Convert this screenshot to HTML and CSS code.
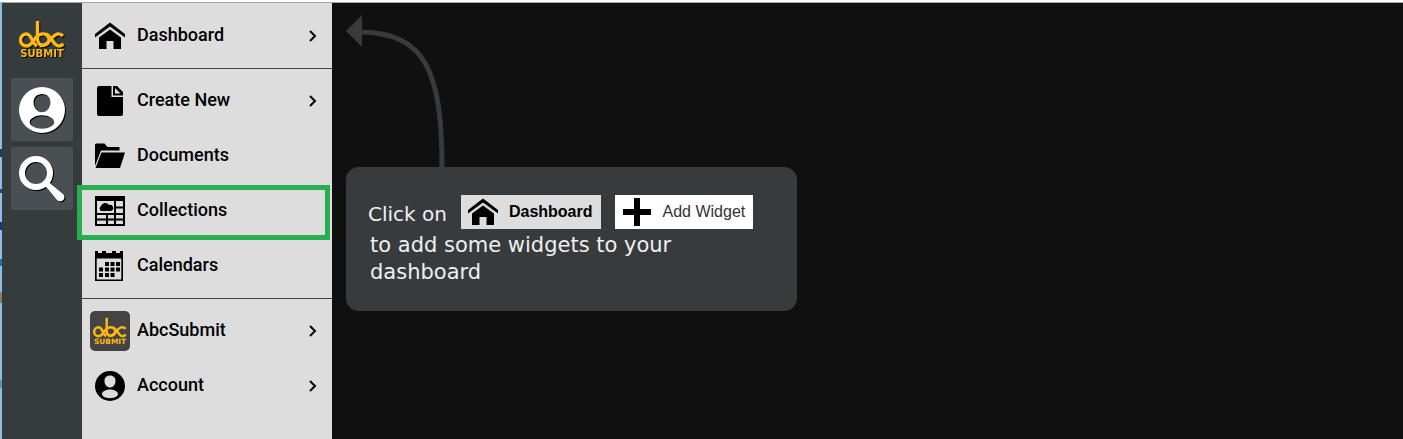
FILE: index.html
```html
<!DOCTYPE html>
<html lang="en">
<head>
  <meta charset="UTF-8">
  <meta name="viewport" content="width=device-width, initial-scale=1.0">
  <title>AbcSubmit - Dashboard</title>
  <link rel="stylesheet" href="styles.css">
</head>
<body>

  <!-- Shared icons -->
  <svg class="sprite" aria-hidden="true">
    <symbol id="logo" viewBox="0 0 46 38">
      <g fill="none" stroke="currentColor" stroke-width="3.4">
        <path d="M18 26C13 24 13 14 7.500 14A6 6 0 1 0 7.500 26C14 26 14 18 20 15C26 12 31 16 30 21C29 26 19 28 18.500 19V1"/>
        <path d="M44 16C40 12 36 14 32 19C28 24 25 26.500 21 25.500M27 14C33 16 34 26 40 26C42 26 43 25 44.500 24"/>
      </g>
      <text class="logo-text" x="23" y="37" text-anchor="middle" fill="currentColor">SUBMIT</text>
    </symbol>
    <symbol id="home" viewBox="0 0 30 30">
      <path d="M15 1.500L0 13v3.500L15 5.500l15 11V13z"/>
      <path d="M15 8.500L4 16.500V28h7.500v-8h7v8H26V16.500z"/>
    </symbol>
    <symbol id="user" viewBox="0 0 30 30">
      <path fill-rule="evenodd" d="M15 0a15 15 0 1 0 0 30a15 15 0 1 0 0-30zM15 4.500c3.500 0 5.500 2.300 5.500 5.500c0 3.500-2.200 6.500-5.500 6.500s-5.500-3-5.500-6.500c0-3.200 2-5.500 5.500-5.500zM15 18.500c4.500 0 8 2.200 8 4.500c0 2.300-3.500 4.200-8 4.200s-8-1.900-8-4.200c0-2.300 3.500-4.500 8-4.500z"/>
    </symbol>
  </svg>

  <div class="app">
    <div class="edge"></div>
    <nav class="rail" aria-label="Quick access">
      <a href="#" class="rail-logo" aria-label="AbcSubmit"><svg><use href="#logo"/></svg></a>
      <button type="button" class="rail-button" aria-label="Profile"><svg><use href="#user"/></svg></button>
      <button type="button" class="rail-button" aria-label="Search">
        <svg viewBox="0 0 46 46">
          <circle cx="17" cy="17" r="14" fill="none" stroke="currentColor" stroke-width="6"/>
          <path d="M26 30l4-4l3 3l11 9c4 4-1 10-6 6L29 33z"/>
        </svg>
      </button>
    </nav>

    <nav class="menu" aria-label="Main menu">
      <div class="menu-group">
        <a href="#" class="menu-item">
          <span class="menu-icon"><svg><use href="#home"/></svg></span>
          <span class="menu-label">Dashboard</span>
          <svg class="chevron" viewBox="0 0 8 12"><path d="M1 1l5 5l-5 5"/></svg>
        </a>
      </div>
      <div class="menu-group">
        <a href="#" class="menu-item">
          <span class="menu-icon"><svg viewBox="0 0 30 30">
            <path d="M4 0h12.500v11H28v17a2 2 0 0 1-2 2H4a2 2 0 0 1-2-2V2a2 2 0 0 1 2-2z"/>
            <path fill-rule="evenodd" d="M18 0h4L28 6v3.500H18zM20 2v5.500h5.500z"/>
          </svg></span>
          <span class="menu-label">Create New</span>
          <svg class="chevron" viewBox="0 0 8 12"><path d="M1 1l5 5l-5 5"/></svg>
        </a>
        <a href="#" class="menu-item">
          <span class="menu-icon"><svg viewBox="0 0 30 30">
            <path d="M0 25V3.500L1 2.500h8.500l3 3.500h12v3.500H6z"/>
            <path d="M6.500 11.500H30L25 27H.500z"/>
          </svg></span>
          <span class="menu-label">Documents</span>
        </a>
        <a href="#" class="menu-item highlighted">
          <span class="menu-icon"><svg viewBox="0 0 30 30">
            <path d="M0 0h30v5H0z"/>
            <path d="M1 0v29h28V0M1 18h28M1 23.500h28M20 5v24M12 18v11M20 11.500h9" fill="none" stroke="currentColor" stroke-width="2"/>
            <path d="M6 15a3 3 0 0 1 0-5a4.500 4.500 0 0 1 8-1a3 3 0 0 1 2 6z"/>
          </svg></span>
          <span class="menu-label">Collections</span>
        </a>
        <a href="#" class="menu-item">
          <span class="menu-icon"><svg viewBox="0 0 30 30">
            <path fill-rule="evenodd" d="M0 0h3v2h4V0h4v2h6V0h4v2h4V0h3v30H0zM1.700 7.500v21h24.600v-21z"/>
            <path d="M10 11h4v4h-4zM15.500 11h4v4h-4zM21 11h4v4h-4zM4 16.500h4v4H4zM10 16.500h4v4h-4zM15.500 16.500h4v4h-4zM21 16.500h4v4h-4zM4 22h4v4H4zM10 22h4v4h-4zM15.500 22h4v4h-4z"/>
          </svg></span>
          <span class="menu-label">Calendars</span>
        </a>
      </div>
      <div class="menu-group">
        <a href="#" class="menu-item">
          <span class="menu-icon brand"><svg><use href="#logo"/></svg></span>
          <span class="menu-label">AbcSubmit</span>
          <svg class="chevron" viewBox="0 0 8 12"><path d="M1 1l5 5l-5 5"/></svg>
        </a>
        <a href="#" class="menu-item">
          <span class="menu-icon"><svg><use href="#user"/></svg></span>
          <span class="menu-label">Account</span>
          <svg class="chevron" viewBox="0 0 8 12"><path d="M1 1l5 5l-5 5"/></svg>
        </a>
      </div>
    </nav>

    <main class="content">
      <svg class="arrow" viewBox="0 0 100 152">
        <path d="M0 16L16 0v32z"/>
        <path d="M15 17C79 18 96 56 96 152" fill="none" stroke="currentColor" stroke-width="5"/>
      </svg>
      <section class="hint">
        <div class="hint-row">
          <span class="hint-lead">Click on</span>
          <button type="button" class="chip chip-dashboard"><svg><use href="#home"/></svg>Dashboard</button>
          <button type="button" class="chip chip-add"><svg viewBox="0 0 30 30"><path d="M12 1h6v11h11v6H18v11h-6V18H1v-6h11z"/></svg>Add Widget</button>
        </div>
        <p>to add some widgets to your<br>dashboard</p>
      </section>
    </main>
  </div>

</body>
</html>
```
FILE: styles.css
```css
* {
  box-sizing: border-box;
}
body {
  margin: 0;
  padding-top: 2px;
  font-family: Roboto, sans-serif;
  background: #fff;
}
svg {
  fill: currentColor;
}
.sprite {
  display: none;
}
.app {
  display: flex;
  min-height: calc(100vh - 2px);
  border-top: 1px solid #a5a5aa;
}
/* sliver of the window behind */
.edge {
  width: 2px;
  background: linear-gradient(#86bfe8 146px, #1c3a6e 146px 154px, #86bfe8 154px 186px, #1c4f8a 186px 190px, #86bfe8 190px 219px, #0c3c7c 219px 227px, #86bfe8 227px 256px, #1f6cb4 256px 263px, #86bfe8 263px 289px, #8a7d5c 289px 300px, #86bfe8 300px 377px, #6a90aa 377px 385px, #86bfe8 385px);
}
.rail {
  display: flex;
  flex-direction: column;
  align-items: center;
  gap: 6px;
  width: 80px;
  padding-top: 17px;
  background: #363b3d;
}
.rail-logo {
  width: 46px;
  height: 38px;
  margin-bottom: 14px;
  color: #fcb913;
  filter: drop-shadow(1px 1px 0 #000);
}
.rail-logo svg {
  width: 46px;
  height: 38px;
}
.logo-text {
  font: bold 10px "DejaVu Sans", sans-serif;
}
.rail-button {
  display: flex;
  align-items: center;
  justify-content: center;
  width: 62px;
  height: 63px;
  padding: 0;
  border: none;
  border-radius: 2px;
  background: #4a4f53;
  color: #fff;
  cursor: pointer;
}
.rail-button svg {
  width: 46px;
  height: 46px;
  filter: drop-shadow(1px 1px 0 #000);
}
.menu {
  width: 250px;
  padding-top: 1px;
  background: #ddd;
}
.menu-group {
  padding: 4px 0 5px;
}
.menu-group + .menu-group {
  border-top: 1px solid #444;
}
.menu-item {
  position: relative;
  display: flex;
  align-items: center;
  gap: 7px;
  height: 55px;
  padding: 0 15px 0 8px;
  color: #000;
  font-size: 18px;
  font-weight: 500;
  text-decoration: none;
}
.menu-icon {
  display: flex;
  align-items: center;
  justify-content: center;
  width: 40px;
  height: 40px;
}
.menu-icon svg {
  width: 30px;
  height: 30px;
}
.menu-icon.brand {
  border-radius: 5px;
  background: #444;
  color: #fcb913;
}
.menu-icon.brand svg {
  width: 36px;
  height: 28px;
}
.menu-label {
  flex: 1;
  padding-bottom: 2px;
}
.chevron {
  width: 8px;
  height: 12px;
  fill: none;
  stroke: currentColor;
  stroke-width: 2;
}
.highlighted::after {
  content: "";
  position: absolute;
  inset: 2px 2px -2px -5px;
  border: 5px solid #27ae50;
}
.content {
  flex: 1;
  padding: 12px 14px;
  background: #101010;
}
.arrow {
  display: block;
  width: 100px;
  height: 152px;
  color: #373b3d;
}
.hint {
  max-width: 451px;
  padding: 28px 22px 25px;
  border-radius: 13px;
  background: #373b3d;
  color: #f0f0f0;
  font-family: "DejaVu Sans", sans-serif;
  font-size: 21px;
  line-height: 27px;
}
.hint-row {
  display: flex;
  flex-wrap: wrap;
  align-items: center;
  gap: 14px;
}
.hint-lead {
  padding-top: 4px;
  font-size: 20px;
}
.hint p {
  margin: 3px 0 0 2px;
}
.chip {
  display: flex;
  align-items: center;
  gap: 11px;
  height: 34px;
  padding: 0 8px 0 7px;
  border: none;
  font: 16px "Liberation Sans", sans-serif;
  cursor: pointer;
}
.chip svg {
  width: 30px;
  height: 30px;
}
.chip-dashboard {
  background: #ddd;
  color: #000;
  font-weight: bold;
}
.chip-add {
  background: #fff;
  color: #333;
}
.chip-add svg {
  color: #000;
}
```
